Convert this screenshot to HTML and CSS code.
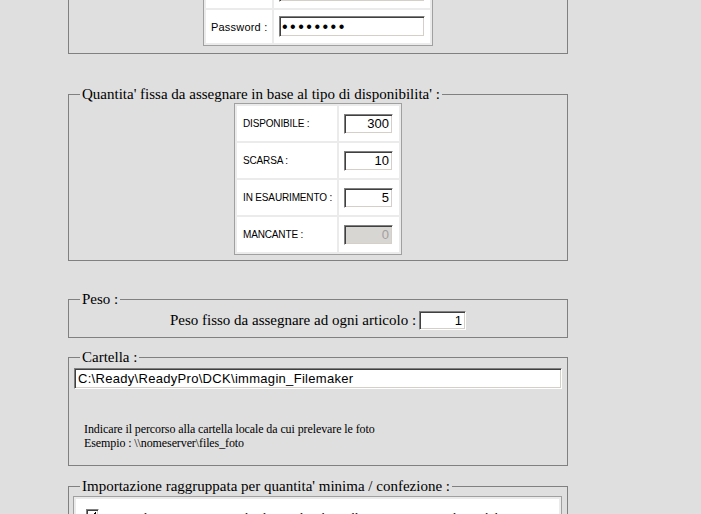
FILE: index.html
```html
<!DOCTYPE html>
<html lang="it">
<head>
<meta charset="utf-8">
<title>Importazione FileMaker</title>
<link rel="stylesheet" href="styles.css">
</head>
<body>
<div class="page">
  <fieldset class="box box-login">
    <legend>Connessione al database :</legend>
    <table class="grid grid-login">
      <tr><td class="lbl">Server :</td><td class="val"><input class="field f-login" value="127.0.0.1"></td></tr>
      <tr><td class="lbl">Utente :</td><td class="val"><input class="field f-login" value="Admin"></td></tr>
      <tr><td class="lbl">Password :</td><td class="val"><input type="password" class="field f-login f-pass" value="password"></td></tr>
    </table>
  </fieldset>

  <fieldset class="box box-qta">
    <legend>Quantita' fissa da assegnare in base al tipo di disponibilita' :</legend>
    <table class="grid grid-qta">
      <tr><td class="lbl">DISPONIBILE :</td><td class="val"><input class="field f-num" value="300"></td></tr>
      <tr><td class="lbl">SCARSA :</td><td class="val"><input class="field f-num" value="10"></td></tr>
      <tr><td class="lbl">IN ESAURIMENTO :</td><td class="val"><input class="field f-num" value="5"></td></tr>
      <tr><td class="lbl">MANCANTE :</td><td class="val"><input class="field f-num" value="0" disabled></td></tr>
    </table>
  </fieldset>

  <fieldset class="box box-peso">
    <legend>Peso :</legend>
    <div class="peso-row">
      <span>Peso fisso da assegnare ad ogni articolo :</span>
      <input class="field f-peso" value="1">
    </div>
  </fieldset>

  <fieldset class="box box-cart">
    <legend>Cartella :</legend>
    <input class="field f-path" value="C:\Ready\ReadyPro\DCK\immagin_Filemaker">
    <div class="hint">
      <div>Indicare il percorso alla cartella locale da cui prelevare le foto</div>
      <div>Esempio : \\nomeserver\files_foto</div>
    </div>
  </fieldset>

  <fieldset class="box box-imp">
    <legend>Importazione raggruppata per quantita' minima / confezione :</legend>
    <div class="imp-inner">
      <label class="chk-row">
        <span class="chk"><svg width="9" height="9" viewBox="0 0 9 9"><path d="M1 4 L3 6 L8 1 M1 5 L3 7 L8 2 M1 6 L3 8 L8 3" stroke="#000" stroke-width="1" fill="none"/></svg></span>
        <span class="chk-text">Importa le scorte raggruppando gli articoli in base alla quantita' minima disponibile</span>
      </label>
    </div>
  </fieldset>
</div>
</body>
</html>
```

FILE: styles.css
```css
html, body {
  margin: 0;
  padding: 0;
  background: #dfdfdf;
}
body {
  font-family: "Liberation Serif", "Times New Roman", serif;
  font-size: 15px;
  color: #000;
  overflow: hidden;
}
.page {
  width: 500px;
  margin: -81px 0 0 68px;
}
.box {
  margin: 0;
  min-width: 0;
  border: 1px solid #808080;
  padding: 0 5px 7px 5px;
}
.box legend {
  margin-left: 6px;
  padding: 0 2px;
  font-size: 15px;
  line-height: 18px;
}
.box-qta { margin-top: 31px; }
.box-peso { margin-top: 29px; }
.box-cart { margin-top: 10px; }
.box-imp { margin-top: 11px; }

.grid {
  border-collapse: separate;
  border-spacing: 2px;
  border: 1px solid #a0a0a0;
  background: #ebebeb;
  margin: 0 auto;
}
.grid td {
  background: #fff;
  padding: 0;
  vertical-align: middle;
}
.lbl {
  font-family: "Liberation Sans", Arial, sans-serif;
  white-space: nowrap;
}
.grid-login td { height: 33px; }
.grid-login .lbl { width: 61px; padding-left: 5px; font-size: 11px; letter-spacing: 0.2px; }
.grid-login .val { width: 151px; padding-left: 5px; }

.grid-qta td { height: 35px; }
.box-qta { padding-bottom: 5px; }
.grid-qta .lbl { width: 94px; padding-left: 6px; font-size: 10px; letter-spacing: -0.15px; }
.grid-qta .val { width: 55px; padding-left: 5px; }

.field {
  box-sizing: border-box;
  display: block;
  margin: 0;
  height: 21px;
  padding: 0 3px;
  background: #fff;
  border: 1px solid;
  border-color: #808080 #ffffff #ffffff #808080;
  box-shadow: inset 1px 1px 0 #404040, inset -1px -1px 0 #d4d0c8;
  font-family: "Liberation Sans", Arial, sans-serif;
  font-size: 13px;
  color: #000;
  outline: none;
}
.f-login { width: 146px; }
.f-pass { font-size: 16px; letter-spacing: 2.5px; padding-left: 2px; }
.f-num { width: 49px; height: 20px; text-align: right; }
.f-num:disabled { background: #d8d6d2; color: #a0a0a0; }

.box-peso { padding-top: 3px; padding-bottom: 7px; }
.peso-row {
  display: flex;
  justify-content: center;
  align-items: center;
  gap: 3px;
}
.f-peso { width: 47px; height: 19px; text-align: right; }

.box-cart { padding-top: 2px; padding-bottom: 15px; }
.f-path { width: 488px; letter-spacing: 0.3px; }
.hint {
  margin: 33px 0 0 10px;
  font-size: 12px;
  line-height: 14px;
  letter-spacing: -0.1px;
}

.box-imp { padding-top: 1px; padding-bottom: 40px; }
.imp-inner {
  margin: 0 0 0 -1px;
  border: 1px solid #a0a0a0;
  padding: 2px;
  background: #ebebeb;
}
.chk-row {
  display: flex;
  align-items: flex-start;
  gap: 4px;
  background: #fff;
  padding: 10px 10px 20px 10px;
  font-size: 12px;
  line-height: 14px;
}
.chk-text { padding-top: 2px; }
.chk {
  box-sizing: border-box;
  width: 13px;
  height: 13px;
  flex: none;
  background: #fff;
  border: 1px solid;
  border-color: #808080 #ffffff #ffffff #808080;
  box-shadow: inset 1px 1px 0 #404040, inset -1px -1px 0 #d4d0c8;
  display: flex;
  align-items: center;
  justify-content: center;
}
```
